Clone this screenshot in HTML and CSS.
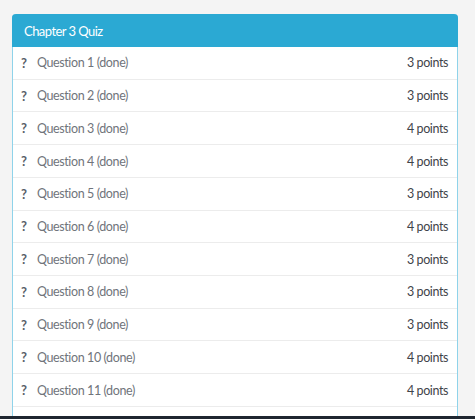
FILE: index.html
```html
<!DOCTYPE html>
<html>
<head>
<meta charset="utf-8">
<link rel="stylesheet" href="styles.css">
</head>
<body>
<div class="page">
  <div class="panel">
    <div class="panel-head">Chapter 3 Quiz</div>
    <ul class="list">
      <li class="row"><span class="q">?</span><span class="label">Question 1 (done)</span><span class="pts">3 points</span></li>
      <li class="row"><span class="q">?</span><span class="label">Question 2 (done)</span><span class="pts">3 points</span></li>
      <li class="row"><span class="q">?</span><span class="label">Question 3 (done)</span><span class="pts">4 points</span></li>
      <li class="row"><span class="q">?</span><span class="label">Question 4 (done)</span><span class="pts">4 points</span></li>
      <li class="row"><span class="q">?</span><span class="label">Question 5 (done)</span><span class="pts">3 points</span></li>
      <li class="row"><span class="q">?</span><span class="label">Question 6 (done)</span><span class="pts">4 points</span></li>
      <li class="row"><span class="q">?</span><span class="label">Question 7 (done)</span><span class="pts">3 points</span></li>
      <li class="row"><span class="q">?</span><span class="label">Question 8 (done)</span><span class="pts">3 points</span></li>
      <li class="row"><span class="q">?</span><span class="label">Question 9 (done)</span><span class="pts">3 points</span></li>
      <li class="row"><span class="q">?</span><span class="label">Question 10 (done)</span><span class="pts">4 points</span></li>
      <li class="row"><span class="q">?</span><span class="label">Question 11 (done)</span><span class="pts">4 points</span></li>
    </ul>
  </div>
</div>
<div class="bottom-bar"></div>
</body>
</html>
```
FILE: styles.css
```css
html, body {
  margin: 0;
  padding: 0;
  height: 100%;
  overflow: hidden;
}
body {
  background: #f4f4f4;
  font-family: Lato, "Noto Sans", sans-serif;
  display: flex;
  flex-direction: column;
}
.page {
  flex: 1;
  padding: 14px 17px 0 12px;
  display: flex;
  flex-direction: column;
  min-height: 0;
}
.panel {
  flex: 1;
  background: #fff;
  border-left: 1px solid #8fd3ea;
  border-right: 1px solid #8fd3ea;
  border-radius: 4px 4px 0 0;
  display: flex;
  flex-direction: column;
}
.panel-head {
  height: 33px;
  box-sizing: border-box;
  background: #2ba9d3;
  color: #fff;
  font-size: 13px;
  letter-spacing: -0.55px;
  display: flex;
  align-items: center;
  padding-left: 12px;
  margin: 0 -1px;
  border-radius: 4px 4px 0 0;
}
.list {
  list-style: none;
  margin: 0;
  padding: 0;
}
.row {
  height: 32.73px;
  box-sizing: border-box;
  border-bottom: 1px solid #ececec;
  display: flex;
  align-items: center;
  padding: 0 9px 0 8px;
  font-size: 12.5px;
  letter-spacing: -0.4px;
}
.q {
  width: 16px;
  font-weight: 700;
  color: #5a6068;
  font-size: 13px;
  letter-spacing: 0;
}
.label {
  flex: 1;
  color: #70747b;
}
.pts {
  color: #3f444a;
}
.bottom-bar {
  height: 3px;
  background: #1f2630;
}
```
